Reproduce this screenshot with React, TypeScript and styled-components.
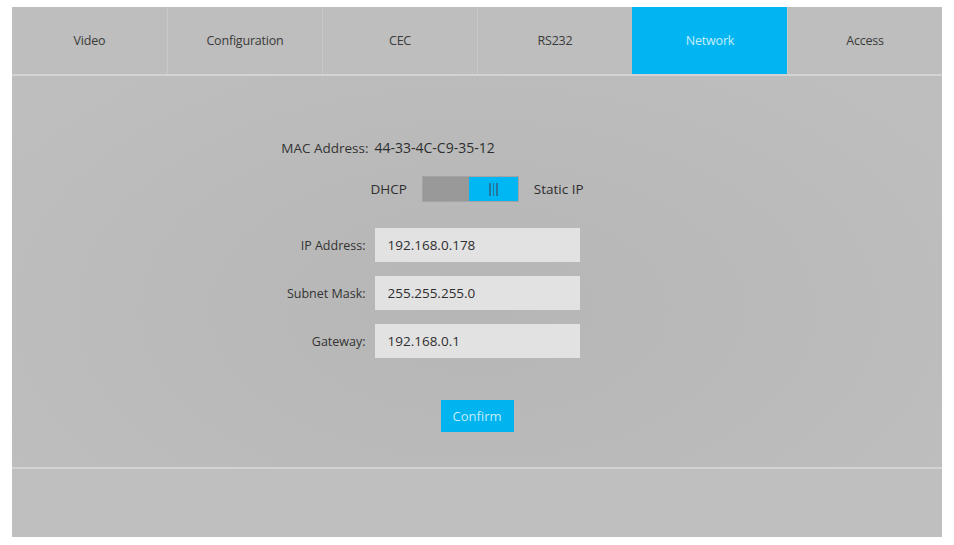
import React, { useState } from 'react';
import styled, { createGlobalStyle } from 'styled-components';

const GlobalStyle = createGlobalStyle`
  html, body {
    margin: 0;
    padding: 0;
    background: #ffffff;
  }
  body {
    font-family: 'Open Sans', 'Noto Sans', sans-serif;
    color: #333333;
  }
`;

const TABS = ['Video', 'Configuration', 'CEC', 'RS232', 'Network', 'Access'];

const FIELDS = [
  { label: 'IP Address:', value: '192.168.0.178' },
  { label: 'Subnet Mask:', value: '255.255.255.0' },
  { label: 'Gateway:', value: '192.168.0.1' },
];

const Page = styled.div`
  width: 954px;
  height: 545px;
  padding: 7px 12px 8px 12px;
  box-sizing: border-box;
`;

const Panel = styled.div`
  height: 100%;
  background: #bebebe;
  display: flex;
  flex-direction: column;
`;

const TabBar = styled.nav`
  display: grid;
  grid-template-columns: repeat(6, 1fr);
  height: 67px;
  border-bottom: 2px solid #d3d3d3;
`;

const Tab = styled.div<{ $active?: boolean }>`
  display: flex;
  align-items: center;
  justify-content: center;
  font-size: 12.5px;
  letter-spacing: -0.2px;
  color: ${({ $active }) => ($active ? '#c9eefc' : '#3a3a3a')};
  background: ${({ $active }) => ($active ? '#00b5f1' : 'transparent')};
  border-left: 1px solid ${({ $active }) => ($active ? '#00b5f1' : '#c9c9c9')};
  &:first-child {
    border-left: none;
  }
`;

const Content = styled.section`
  height: 393px;
  box-sizing: border-box;
  padding-top: 62px;
  border-bottom: 2px solid #d3d3d3;
  background: radial-gradient(ellipse 60% 80% at 50% 60%, #b6b6b6 0%, #bababa 55%, #bebebe 100%);
  display: flex;
  flex-direction: column;
`;

const Grid = styled.div`
  display: grid;
  grid-template-columns: 1fr 205px 1fr;
  align-items: center;
`;

const Label = styled.span<{ $gap?: number; $size?: number }>`
  grid-column: 1;
  justify-self: end;
  padding-right: ${({ $gap }) => $gap ?? 9}px;
  font-size: ${({ $size }) => $size ?? 12.5}px;
  color: #333333;
`;

const MacValue = styled.span`
  grid-column: 2;
  font-size: 14px;
  color: #2e2e2e;
`;

const ModeRow = styled.div`
  display: flex;
  align-items: center;
  justify-content: center;
  gap: 15px;
  height: 26px;
  margin: 19px 0 26px;
  font-size: 13.5px;
  color: #2e2e2e;
`;

const Toggle = styled.button`
  display: flex;
  width: 97px;
  height: 26px;
  padding: 0;
  border: 1px solid #a3a3a3;
  background: #999999;
  cursor: pointer;
  box-sizing: border-box;
`;

const Knob = styled.span<{ $right: boolean }>`
  width: 49px;
  height: 100%;
  margin-left: ${({ $right }) => ($right ? 'auto' : '0')};
  background: #00b6f3;
  display: flex;
  align-items: center;
  justify-content: center;
  gap: 2px;
`;

const Grip = styled.i`
  width: 1.5px;
  height: 13px;
  background: #23779f;
`;

const FieldGrid = styled(Grid)`
  row-gap: 14px;
`;

const Input = styled.input`
  grid-column: 2;
  height: 34px;
  width: 205px;
  box-sizing: border-box;
  border: none;
  outline: none;
  background: #e2e2e2;
  padding: 0 13px;
  font-family: 'Open Sans', 'Noto Sans', sans-serif;
  font-size: 13.5px;
  color: #2e2e2e;
`;

const Confirm = styled.button`
  align-self: center;
  margin-top: 42px;
  width: 73px;
  height: 32px;
  border: none;
  background: #00b4ef;
  color: #c3ecfb;
  font-family: 'Open Sans', 'Noto Sans', sans-serif;
  font-size: 13px;
  cursor: pointer;
`;

const Footer = styled.div`
  flex: 1;
  background: #bfbfbf;
`;

export default function App() {
  const [staticIp, setStaticIp] = useState(true);
  return (
    <Page>
      <GlobalStyle />
      <Panel>
        <TabBar>
          {TABS.map((t) => (
            <Tab key={t} $active={t === 'Network'}>
              {t}
            </Tab>
          ))}
        </TabBar>
        <Content>
          <Grid>
            <Label $gap={6} $size={13.5}>
              MAC Address:
            </Label>
            <MacValue>44-33-4C-C9-35-12</MacValue>
          </Grid>
          <ModeRow>
            <span>DHCP</span>
            <Toggle onClick={() => setStaticIp(!staticIp)}>
              <Knob $right={staticIp}>
                <Grip />
                <Grip />
                <Grip />
              </Knob>
            </Toggle>
            <span>Static IP</span>
          </ModeRow>
          <FieldGrid>
            {FIELDS.map((f) => (
              <React.Fragment key={f.label}>
                <Label>{f.label}</Label>
                <Input defaultValue={f.value} />
              </React.Fragment>
            ))}
          </FieldGrid>
          <Confirm>Confirm</Confirm>
        </Content>
        <Footer />
      </Panel>
    </Page>
  );
}
